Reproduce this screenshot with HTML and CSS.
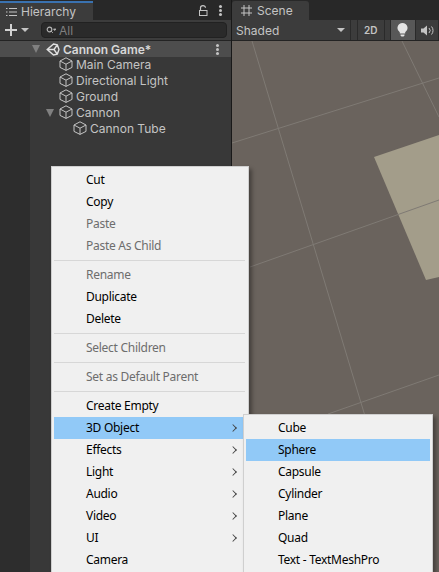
FILE: index.html
```html
<!DOCTYPE html>
<html lang="en">

<head>
  <meta charset="UTF-8">
  <meta name="viewport" content="width=device-width, initial-scale=1.0">
  <title>Hierarchy</title>
  <link rel="stylesheet" href="styles.css">
</head>

<body>
  <svg class="defs" width="0" height="0">
    <symbol id="cube" viewBox="0 0 14 14">
      <path d="M7 .8 13 4v6.400L7 13.400 1 10.400V4zM1 4l6 3.200L13 4M7 7.200v6.200" fill="none" stroke="#c4c4c4" stroke-width="1"/>
    </symbol>
  </svg>

  <div class="editor">
    <section class="hierarchy">
      <div class="tabstrip">
        <div class="tab tab-active">
          <svg class="tab-icon" width="11" height="10" viewBox="0 0 11 10"><path d="M3 1.500h8M3 5h8M3 8.500h8" stroke="#c4c4c4"/><path d="M0 1.500h1.500M0 5h1.500M0 8.500h1.500" stroke="#c4c4c4"/></svg>
          <span>Hierarchy</span>
        </div>
        <div class="tab-tools">
          <svg width="9" height="11" viewBox="0 0 9 11"><path d="M1.500 5V2.800a2.500 2.200 0 0 1 5 0" fill="none" stroke="#c4c4c4" stroke-width="1.200"/><rect x=".5" y="5.500" width="7.500" height="5" fill="none" stroke="#c4c4c4"/></svg>
          <span class="kebab"></span>
        </div>
      </div>
      <div class="toolbar">
        <svg class="plus" width="12" height="12" viewBox="0 0 12 12"><path d="M6 0v12M0 6h12" stroke="#d2d2d2" stroke-width="2"/></svg>
        <span class="caret"></span>
        <div class="search">
          <svg width="10" height="9" viewBox="0 0 10 9"><circle cx="3.500" cy="3.500" r="2.300" fill="none" stroke="#b4b4b4" stroke-width="1.200"/><path d="m5 5 2 2M7.500 3h2.500L8.700 4.500z" stroke="#b4b4b4" fill="#b4b4b4" stroke-width=".8"/></svg>
          <span>All</span>
        </div>
      </div>
      <div class="scene-row">
        <span class="fold"></span>
        <svg width="14" height="13" viewBox="0 0 14 13"><path d="M7.500 1 11.300 1.800 13 6.500 11.300 11.200 7.500 12 1.200 6.500zM1.200 6.500H8L11.300 1.800M8 6.500 11.300 11.200" fill="none" stroke="#e0e0e0" stroke-width="1.400"/></svg>
        <b>Cannon Game*</b>
        <span class="kebab"></span>
      </div>
      <div class="tree">
        <div class="tree-row"><svg class="cube"><use href="#cube"/></svg>Main Camera</div>
        <div class="tree-row"><svg class="cube"><use href="#cube"/></svg>Directional Light</div>
        <div class="tree-row"><svg class="cube"><use href="#cube"/></svg>Ground</div>
        <div class="tree-row"><span class="fold fold-child"></span><svg class="cube"><use href="#cube"/></svg>Cannon</div>
        <div class="tree-row tree-row-sub"><svg class="cube"><use href="#cube"/></svg>Cannon Tube</div>
      </div>
    </section>

    <section class="scene">
      <div class="tabstrip">
        <div class="tab tab-scene">
          <svg class="tab-icon" width="11" height="11" viewBox="0 0 11 11"><path d="M3 0v11M8 0v11M0 3h11M0 8h11" stroke="#c4c4c4"/></svg>
          <span>Scene</span>
        </div>
      </div>
      <div class="scene-tools">
        <div class="shaded">Shaded<span class="caret"></span></div>
        <div class="tool tool-2d">2D</div>
        <div class="tool tool-on">
          <svg width="11" height="14" viewBox="0 0 11 14"><path d="M5.500 0a5 5 0 0 1 2.700 9.200V10.500H2.800V9.200A5 5 0 0 1 5.500 0zM3.500 11.500h4v1l-1 1h-2l-1-1z" fill="#e4e4e4"/></svg>
        </div>
        <div class="tool tool-audio">
          <svg width="13" height="11" viewBox="0 0 13 11"><path d="M0 3.500h2.500L6 .5v10L2.500 7.500H0z" fill="#c4c4c4"/><path d="M8 3a3.500 3.500 0 0 1 0 5M10.500 1.500a6 6 0 0 1 0 8" fill="none" stroke="#c4c4c4"/></svg>
        </div>
      </div>
      <svg class="viewport" viewBox="0 0 207 531" preserveAspectRatio="none">
        <path d="M142 116 207 94V236L194 239z" fill="#a39d8a"/>
        <g stroke="#7f7a74" fill="none">
          <path d="M20 0 180 531"/>
          <path d="M170 0 207 76"/>
          <path d="M0 102 207 37"/>
          <path d="M18 226 207 159"/>
          <path d="M96 373 207 334"/>
        </g>
      </svg>
    </section>
  </div>

  <div class="menu menu-main">
    <div class="item">Cut</div>
    <div class="item">Copy</div>
    <div class="item off">Paste</div>
    <div class="item off">Paste As Child</div>
    <div class="sep"></div>
    <div class="item off">Rename</div>
    <div class="item">Duplicate</div>
    <div class="item">Delete</div>
    <div class="sep"></div>
    <div class="item off">Select Children</div>
    <div class="sep"></div>
    <div class="item off">Set as Default Parent</div>
    <div class="sep"></div>
    <div class="item">Create Empty</div>
    <div class="item hot">3D Object<span class="arrow"></span></div>
    <div class="item">Effects<span class="arrow"></span></div>
    <div class="item">Light<span class="arrow"></span></div>
    <div class="item">Audio<span class="arrow"></span></div>
    <div class="item">Video<span class="arrow"></span></div>
    <div class="item">UI<span class="arrow"></span></div>
    <div class="item">Camera</div>
  </div>

  <div class="menu menu-sub">
    <div class="item">Cube</div>
    <div class="item hot">Sphere</div>
    <div class="item">Capsule</div>
    <div class="item">Cylinder</div>
    <div class="item">Plane</div>
    <div class="item">Quad</div>
    <div class="item">Text - TextMeshPro</div>
  </div>
</body>

</html>
```

FILE: styles.css
```css
html,
body {
  margin: 0;
  height: 100%;
  overflow: hidden;
}

body {
  font-family: 'Inter', sans-serif;
  font-size: 12px;
  color: #c4c4c4;
  background-color: #191919;
}

.defs {
  position: absolute;
}

.editor {
  display: flex;
  height: 572px;
}

.hierarchy {
  width: 231px;
  display: flex;
  flex-direction: column;
  border-right: 1px solid #191919;
  background-color: #2d2d2d;
}

.tabstrip {
  height: 20px;
  display: flex;
  justify-content: space-between;
  background-color: #282828;
  flex: none;
}

.tab {
  display: flex;
  align-items: center;
  gap: 4px;
  background-color: #3c3c3c;
  margin-top: 1px;
}

.tab-active {
  width: 93px;
  box-sizing: border-box;
  padding-left: 6px;
  border-top: 2px solid #3a72b0;
}

.tab-scene {
  width: 77px;
  box-sizing: border-box;
  padding-left: 9px;
  gap: 5px;
  border-radius: 3px 3px 0 0;
}

.tab-tools {
  display: flex;
  align-items: center;
  gap: 11px;
  padding-right: 9px;
}

.kebab {
  width: 3px;
  height: 3px;
  border-radius: 50%;
  background-color: #c4c4c4;
  box-shadow: 0 -4px 0 #c4c4c4, 0 4px 0 #c4c4c4;
}

.toolbar {
  height: 20px;
  display: flex;
  align-items: center;
  background-color: #3c3c3c;
  border-bottom: 1px solid #232323;
  flex: none;
}

.plus {
  margin-left: 5px;
}

.caret {
  width: 0;
  height: 0;
  border-left: 4px solid transparent;
  border-right: 4px solid transparent;
  border-top: 4px solid #c4c4c4;
}

.toolbar .caret {
  margin-left: 4px;
}

.search {
  margin-left: 12px;
  width: 186px;
  height: 16px;
  display: flex;
  align-items: center;
  gap: 3px;
  padding-left: 4px;
  box-sizing: border-box;
  background-color: #2a2a2a;
  border: 1px solid #212121;
  border-radius: 4px;
  color: #7f7f7f;
}

.scene-row {
  height: 16px;
  display: flex;
  align-items: center;
  background-color: #4d4d4d;
  padding-left: 32px;
  gap: 3px;
  flex: none;
  color: #d8d8d8;
}

.scene-row svg {
  margin-left: 3px;
}

.scene-row b {
  font-weight: 600;
}

.scene-row .kebab {
  margin-left: auto;
  margin-right: 12px;
}

.fold {
  width: 0;
  height: 0;
  border-left: 4px solid transparent;
  border-right: 4px solid transparent;
  border-top: 8px solid #808080;
}

.tree {
  flex: 1;
  background-color: #383838;
  margin-left: 30px;
}

.tree-row {
  height: 16px;
  display: flex;
  align-items: center;
  gap: 3px;
  padding-left: 29px;
  padding-bottom: 2px;
  box-sizing: border-box;
  position: relative;
}

.tree-row-sub {
  padding-left: 43px;
}

.fold-child {
  position: absolute;
  left: 16px;
  top: 4px;
}

.cube {
  width: 14px;
  height: 14px;
  flex: none;
}

.scene {
  flex: 1;
  display: flex;
  flex-direction: column;
  min-width: 0;
}

.scene-tools {
  height: 20px;
  display: flex;
  align-items: stretch;
  background-color: #3c3c3c;
  border-bottom: 1px solid #232323;
  flex: none;
}

.shaded {
  width: 120px;
  display: flex;
  align-items: center;
  justify-content: space-between;
  padding: 0 5px 0 4px;
  box-sizing: border-box;
  border-right: 1px solid #2a2a2a;
}

.tool {
  display: flex;
  align-items: center;
  justify-content: center;
  border-right: 1px solid #2a2a2a;
}

.tool-2d {
  margin-left: 6px;
  width: 26px;
  border-left: 1px solid #2a2a2a;
  font-size: 10px;
  font-weight: 600;
}

.tool-on {
  margin-left: 5px;
  width: 25px;
  background-color: #585858;
  border-left: 1px solid #2a2a2a;
}

.tool-audio {
  width: 22px;
}

.viewport {
  flex: 1;
  display: block;
  width: 100%;
  background-color: #6a635d;
}

.menu {
  position: absolute;
  box-sizing: border-box;
  background-color: #f0f0f0;
  border: 1px solid #cfcfcf;
  padding: 2px;
  color: #000;
  font-family: 'Noto Sans', sans-serif;
  font-size: 12px;
  letter-spacing: -0.28px;
  box-shadow: 3px 3px 4px rgba(0, 0, 0, 0.35);
}

.menu-main {
  left: 51px;
  top: 166px;
  width: 198px;
  height: 420px;
}

.menu-sub {
  left: 243px;
  top: 414px;
  width: 190px;
  height: 170px;
}

.item {
  height: 22px;
  line-height: 22px;
  padding-left: 32px;
  position: relative;
}

.off {
  color: #6d6d6d;
}

.hot {
  background-color: #91c9f7;
}

.sep {
  height: 1px;
  background-color: #d7d7d7;
  margin: 3px 1px 3px 0;
}

.arrow {
  position: absolute;
  right: 10px;
  top: 8px;
  width: 5px;
  height: 5px;
  border-top: 1px solid #404040;
  border-right: 1px solid #404040;
  transform: rotate(45deg) scale(0.9);
}
```
